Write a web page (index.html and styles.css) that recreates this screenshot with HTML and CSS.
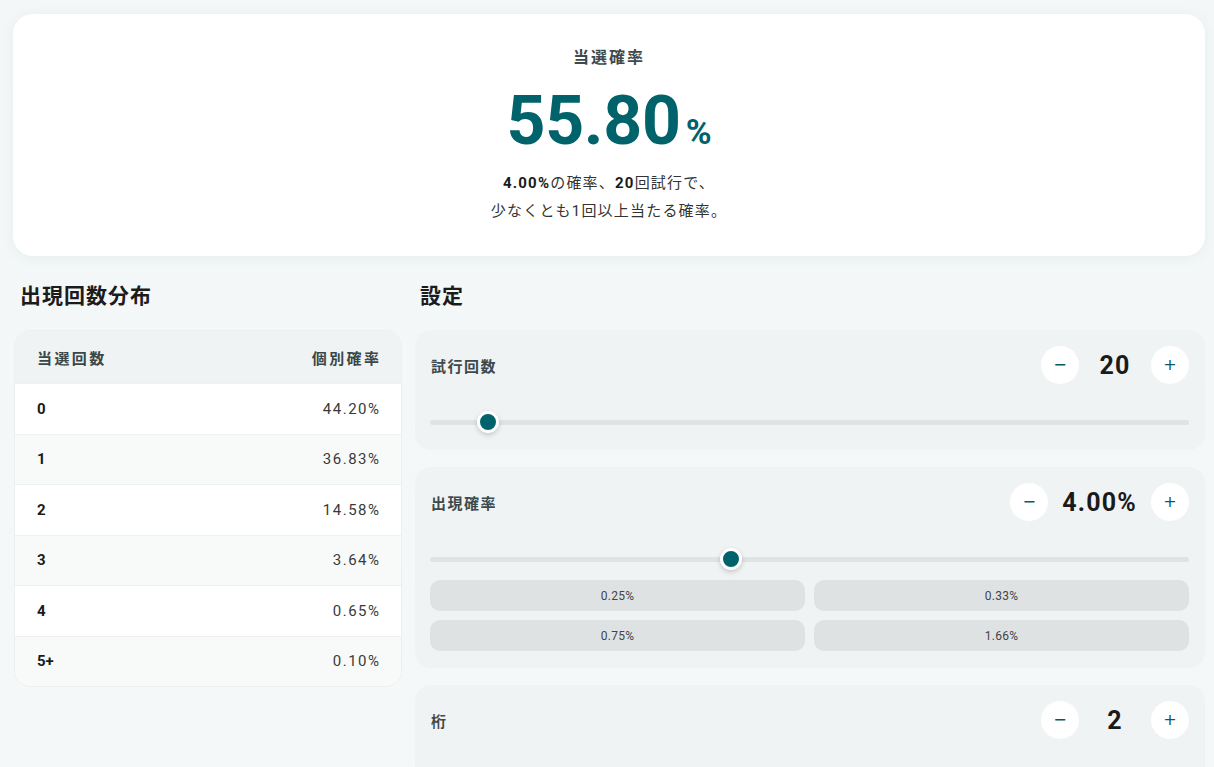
FILE: index.html
```html
<!DOCTYPE html>
<html lang="ja">
<head>
<meta charset="utf-8">
<title>当選確率</title>
<link rel="stylesheet" href="styles.css">
</head>
<body>
<div class="page">
  <section class="hero">
    <div class="hero-label">当選確率</div>
    <div class="hero-value"><span class="hero-num">55.80</span><span class="hero-pct">%</span></div>
    <p class="hero-desc"><b>4.00%</b>の確率、<b>20</b>回試行で、<br>少なくとも1回以上当たる確率。</p>
  </section>

  <div class="columns">
    <div class="col-left">
      <h2 class="section-title">出現回数分布</h2>
      <div class="table">
        <div class="trow thead"><span>当選回数</span><span>個別確率</span></div>
        <div class="trow"><span class="k">0</span><span class="v">44.20%</span></div>
        <div class="trow alt"><span class="k">1</span><span class="v">36.83%</span></div>
        <div class="trow"><span class="k">2</span><span class="v">14.58%</span></div>
        <div class="trow alt"><span class="k">3</span><span class="v">3.64%</span></div>
        <div class="trow"><span class="k">4</span><span class="v">0.65%</span></div>
        <div class="trow alt"><span class="k">5+</span><span class="v">0.10%</span></div>
      </div>
    </div>

    <div class="col-right">
      <h2 class="section-title">設定</h2>

      <div class="card">
        <div class="card-head">
          <span class="card-label">試行回数</span>
          <div class="stepper">
            <button class="step">−</button>
            <span class="step-value">20</span>
            <button class="step">+</button>
          </div>
        </div>
        <div class="slider"><div class="track"></div><div class="thumb" style="left:7.64%"></div></div>
      </div>

      <div class="card">
        <div class="card-head">
          <span class="card-label">出現確率</span>
          <div class="stepper">
            <button class="step">−</button>
            <span class="step-value">4.00%</span>
            <button class="step">+</button>
          </div>
        </div>
        <div class="slider"><div class="track"></div><div class="thumb" style="left:39.66%"></div></div>
        <div class="presets">
          <button class="preset">0.25%</button>
          <button class="preset">0.33%</button>
          <button class="preset">0.75%</button>
          <button class="preset">1.66%</button>
        </div>
      </div>

      <div class="card">
        <div class="card-head">
          <span class="card-label">桁</span>
          <div class="stepper">
            <button class="step">−</button>
            <span class="step-value">2</span>
            <button class="step">+</button>
          </div>
        </div>
        <div class="slider"><div class="track"></div></div>
      </div>
    </div>
  </div>
</div>
</body>
</html>
```
FILE: styles.css
```css
* { box-sizing: border-box; }
html, body { margin: 0; padding: 0; }
body {
  background: linear-gradient(180deg, #f3f7f8 0%, #f5f8f9 100%);
  font-family: Roboto, "Noto Sans CJK JP", sans-serif;
  color: #222;
  overflow: hidden;
  height: 767px;
}
.page {
  width: 1192px;
  margin: 0 0 0 13px;
  padding-top: 14px;
}
.hero {
  background: #fff;
  border-radius: 20px;
  box-shadow: 0 2px 14px rgba(20, 60, 70, 0.06);
  padding: 32px 20px 31px;
  text-align: center;
}
.hero-label {
  font-size: 16px;
  line-height: 24px;
  font-weight: 700;
  letter-spacing: 2px;
  color: #3d4a4c;
}
.hero-value {
  margin-top: 16px;
  color: #00626a;
  font-weight: 700;
  line-height: 70px;
  height: 70px;
}
.hero-num { font-size: 68px; letter-spacing: -0.3px; }
.hero-pct { font-size: 35px; margin-left: 5px; }
.hero-desc {
  margin: 13px 0 0;
  font-size: 15px;
  line-height: 28px;
  letter-spacing: 1.2px;
  color: #333;
}
.hero-desc b { color: #1a1a1a; font-weight: 700; }

.columns {
  display: grid;
  grid-template-columns: 389px 790px;
  column-gap: 13px;
  margin-top: 25px;
}
.col-left { padding-left: 1px; }
.section-title {
  margin: 0 0 19px;
  padding-left: 6px;
  font-size: 21px;
  line-height: 30px;
  font-weight: 700;
  letter-spacing: 1px;
  color: #1c1c1c;
}
.col-right .section-title { padding-left: 5px; }

.table {
  border: 1px solid #eaeff0;
  border-radius: 16px;
  overflow: hidden;
  background: #fff;
}
.trow {
  display: flex;
  justify-content: space-between;
  align-items: center;
  height: 50.5px;
  padding: 0 22px 0 22px;
  border-top: 1px solid #edf1f2;
  background: #fff;
}
.trow.alt { background: #f8fafa; }
.trow.thead {
  height: 52px;
  border-top: none;
  background: #f0f3f4;
  font-size: 15px;
  font-weight: 700;
  letter-spacing: 2.4px;
  color: #3a4749;
}
.trow.thead span:last-child { margin-right: -2.4px; }
.k { font-size: 15px; font-weight: 700; color: #1a1a1a; }
.v { font-size: 15px; font-weight: 400; color: #3a3a3a; letter-spacing: 1.5px; margin-right: -1.5px; }

.card {
  background: #f0f3f4;
  border-radius: 16px;
  padding: 16px 16px 17px 15px;
  margin-bottom: 17px;
}
.card-head {
  display: flex;
  align-items: center;
  justify-content: space-between;
  height: 38px;
}
.card-label {
  padding-left: 1px;
  font-size: 15px;
  font-weight: 700;
  letter-spacing: 1.5px;
  color: #3d4a4c;
}
.stepper { display: flex; align-items: center; }
.step {
  width: 38px;
  height: 38px;
  border: none;
  border-radius: 50%;
  background: #fff;
  color: #0a5a60;
  font-family: "DejaVu Sans", sans-serif;
  font-size: 16px;
  line-height: 38px;
  padding: 0;
}
.step-value {
  min-width: 44px;
  padding: 0 14px;
  box-sizing: content-box;
  text-align: center;
  font-size: 25px;
  font-weight: 700;
  letter-spacing: 1.2px;
  color: #1a1a1a;
}
.slider {
  position: relative;
  height: 22px;
  margin-top: 27px;
}
.track {
  position: absolute;
  left: 0;
  right: 0;
  top: 9px;
  height: 5px;
  border-radius: 3px;
  background: #dfe3e4;
}
.thumb {
  position: absolute;
  top: 0;
  width: 22px;
  height: 22px;
  margin-left: -11px;
  border-radius: 50%;
  background: #00626a;
  border: 3px solid #fff;
  box-shadow: 0 2px 5px rgba(0, 0, 0, 0.18);
}
.presets {
  display: grid;
  grid-template-columns: 1fr 1fr;
  gap: 9px;
  margin-top: 10px;
}
.preset {
  height: 31px;
  border: none;
  border-radius: 10px;
  background: #dfe2e3;
  font-family: Roboto, sans-serif;
  font-size: 12px;
  color: #444;
  letter-spacing: 0.3px;
}
```
